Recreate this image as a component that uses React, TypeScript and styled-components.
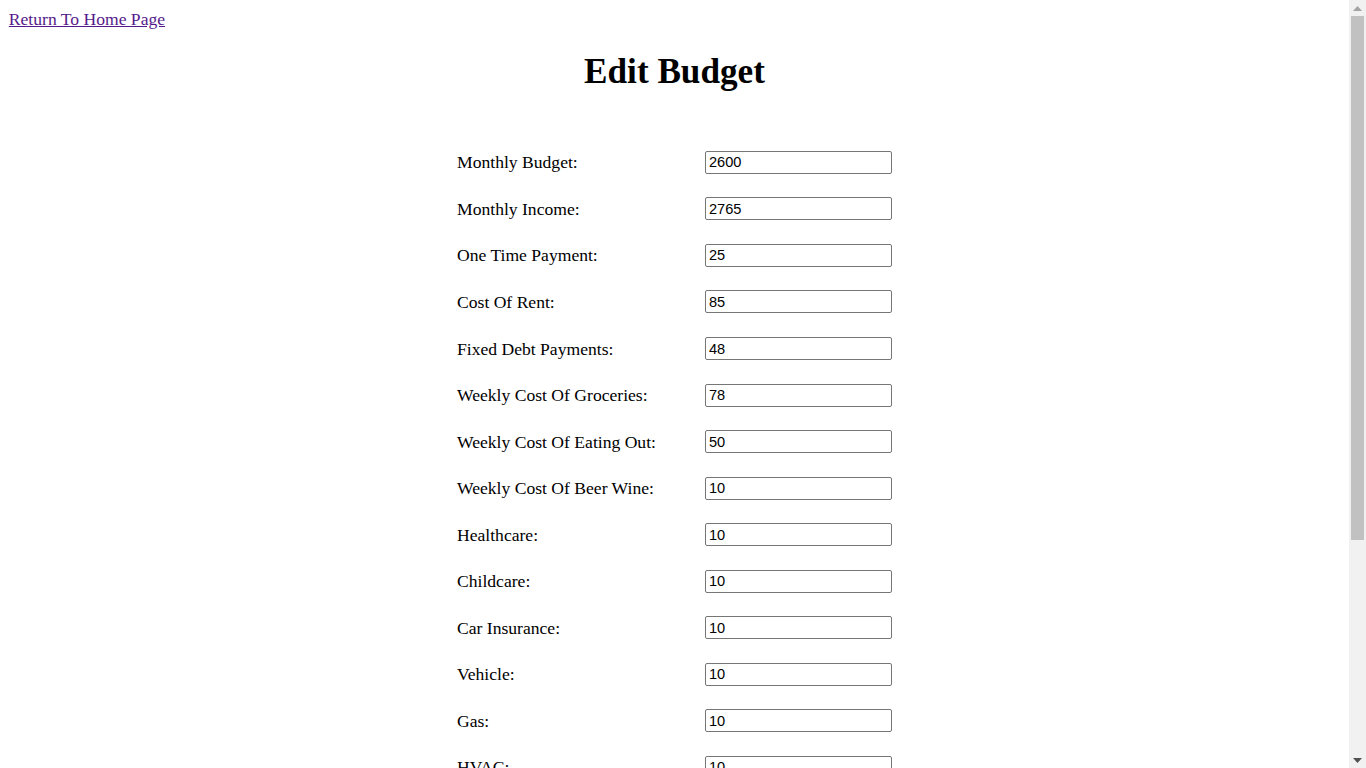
import React from "react";
import styled, { createGlobalStyle } from "styled-components";

const GlobalStyle = createGlobalStyle`
  html, body {
    margin: 0;
    padding: 0;
    background: #ffffff;
  }
  body {
    font-family: "Liberation Serif", "Times New Roman", serif;
    color: #000000;
  }
`;

const Page = styled.div`
  padding: 8.8px calc(17px + 8.8px) 12px 8.8px;
`;

const HomeLink = styled.a`
  display: inline-block;
  font-size: 17.6px;
  line-height: 20px;
  color: #551a8b;
  text-decoration: underline;
  cursor: pointer;
`;

const Title = styled.h1`
  margin: 23.6px 0 58px;
  font-size: 35.2px;
  line-height: 40.5px;
  font-weight: bold;
  text-align: center;
`;

const Form = styled.form`
  width: 435px;
  margin: 0 auto;
  display: grid;
  grid-template-columns: 248px 187px;
  grid-auto-rows: 23px;
  row-gap: 23.54px;
  align-items: center;
`;

const Label = styled.label`
  font-size: 17.6px;
  line-height: 20px;
  white-space: nowrap;
`;

const Field = styled.input`
  box-sizing: border-box;
  width: 187px;
  height: 23px;
  margin: 0;
  padding: 1px 3px;
  border: 1px solid #767676;
  border-radius: 2px;
  background: #ffffff;
  font-family: "Liberation Sans", Arial, sans-serif;
  font-size: 14.6px;
  color: #000000;
  outline: none;
`;

const SubmitButton = styled.button`
  grid-column: 1 / span 2;
  justify-self: center;
  height: 23px;
  font-family: "Liberation Sans", Arial, sans-serif;
  font-size: 14.6px;
  padding: 1px 8px;
  border: 1px solid #767676;
  border-radius: 2px;
  background: #efefef;
`;

/* Imitation of the classic browser scrollbar that sits over the right edge */
const ScrollRail = styled.div`
  position: fixed;
  top: 0;
  right: 0;
  width: 17px;
  height: 100vh;
  background: #f1f1f1;
  display: flex;
  flex-direction: column;
  align-items: center;
`;

const ArrowButton = styled.div`
  flex: 0 0 16px;
  width: 17px;
  display: flex;
  align-items: center;
  justify-content: center;
`;

const Track = styled.div`
  flex: 1;
  width: 17px;
  display: flex;
  flex-direction: column;
  align-items: center;
`;

const Thumb = styled.div`
  width: 13px;
  height: 524px;
  background: #c1c1c1;
`;

const fields: [string, string][] = [
  ["Monthly Budget:", "2600"],
  ["Monthly Income:", "2765"],
  ["One Time Payment:", "25"],
  ["Cost Of Rent:", "85"],
  ["Fixed Debt Payments:", "48"],
  ["Weekly Cost Of Groceries:", "78"],
  ["Weekly Cost Of Eating Out:", "50"],
  ["Weekly Cost Of Beer Wine:", "10"],
  ["Healthcare:", "10"],
  ["Childcare:", "10"],
  ["Car Insurance:", "10"],
  ["Vehicle:", "10"],
  ["Gas:", "10"],
  ["HVAC:", "10"],
  ["Electricity:", "10"],
  ["Water:", "10"],
  ["Internet:", "10"],
  ["Phone:", "10"],
  ["Entertainment:", "10"],
];

export default function App() {
  return (
    <>
      <GlobalStyle />
      <Page>
        <HomeLink href="#">Return To Home Page</HomeLink>
        <Title>Edit Budget</Title>
        <Form onSubmit={(e) => e.preventDefault()}>
          {fields.map(([label, value], i) => (
            <React.Fragment key={label}>
              <Label htmlFor={`f${i}`}>{label}</Label>
              <Field id={`f${i}`} type="text" defaultValue={value} />
            </React.Fragment>
          ))}
          <SubmitButton type="submit">Submit</SubmitButton>
        </Form>
      </Page>
      <ScrollRail aria-hidden="true">
        <ArrowButton>
          <svg width="9" height="5" viewBox="0 0 9 5">
            <polygon points="0,5 4.5,0 9,5" fill="#a3a3a3" />
          </svg>
        </ArrowButton>
        <Track>
          <Thumb />
        </Track>
        <ArrowButton>
          <svg width="9" height="5" viewBox="0 0 9 5">
            <polygon points="0,0 9,0 4.5,5" fill="#505050" />
          </svg>
        </ArrowButton>
      </ScrollRail>
    </>
  );
}
